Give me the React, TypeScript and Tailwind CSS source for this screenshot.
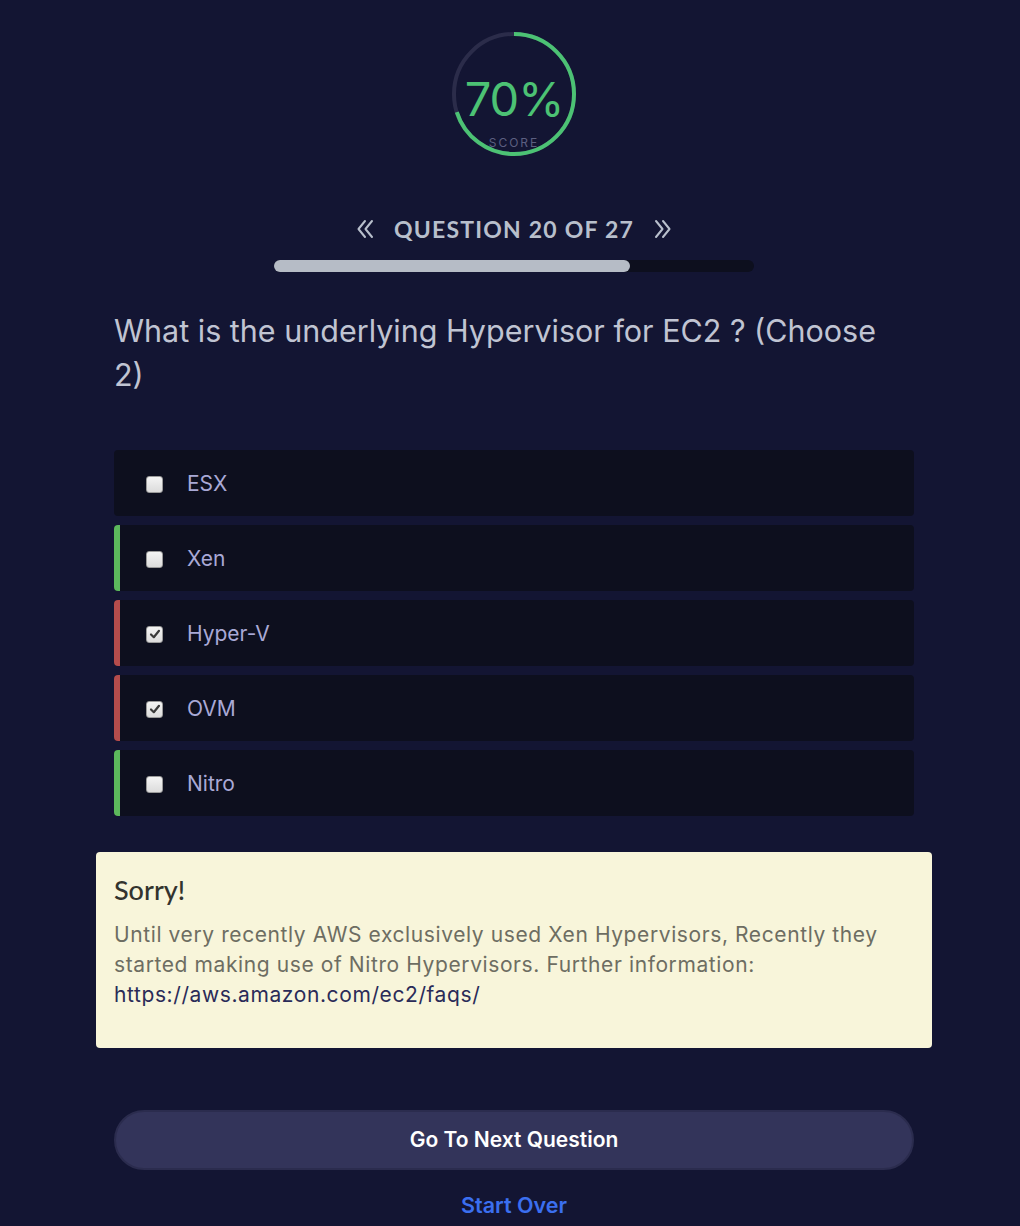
const options = [
  { label: "ESX", checked: false, mark: "" },
  { label: "Xen", checked: false, mark: "bg-[#5cb85c]" },
  { label: "Hyper-V", checked: true, mark: "bg-[#b54c4c]" },
  { label: "OVM", checked: true, mark: "bg-[#b54c4c]" },
  { label: "Nitro", checked: false, mark: "bg-[#5cb85c]" },
];

const ScoreRing = ({ value }: { value: number }) => {
  const r = 60;
  const c = 2 * Math.PI * r;
  return (
    <div className="relative h-[128px] w-[128px]">
      <svg width="128" height="128" viewBox="0 0 128 128">
        <circle cx="64" cy="64" r={r} fill="none" stroke="#2b2c4a" strokeWidth="4" />
        <circle
          cx="64"
          cy="64"
          r={r}
          fill="none"
          stroke="#4cc274"
          strokeWidth="4"
          strokeDasharray={`${(c * value) / 100} ${c}`}
          transform="rotate(-90 64 64)"
        />
      </svg>
      <div className="absolute inset-0 flex flex-col items-center">
        <span className="mt-[45px] text-[47px] leading-[48px] text-[#4cc274] font-['Inter',sans-serif] font-normal tracking-[-1px]">
          {value}%
        </span>
        <span className="mt-[14px] text-[12px] leading-[12px] tracking-[2px] text-[#5c5f80] font-['Inter',sans-serif]">
          SCORE
        </span>
      </div>
    </div>
  );
};

// double chevron, drawn taller than lucide's
const Chevrons = ({ flip }: { flip?: boolean }) => (
  <svg width="18" height="20" viewBox="0 0 18 20" className={flip ? "-scale-x-100" : ""}>
    <path d="M9 2 L2.5 10 L9 18 M16 2 L9.5 10 L16 18" fill="none" stroke="currentColor" strokeWidth="2" strokeLinecap="round" strokeLinejoin="round" />
  </svg>
);

const Checkbox = ({ checked }: { checked: boolean }) => (
  <div className="flex h-[17px] w-[17px] items-center justify-center rounded-[3px] border border-[#9a9a9a] bg-gradient-to-b from-[#f4f4f4] to-[#dcdcdc]">
    {checked && (
      <svg width="12" height="12" viewBox="0 0 12 12">
        <path d="M2 6.5 L4.8 9.2 L10 2.8" fill="none" stroke="#3a3a3a" strokeWidth="2.2" strokeLinecap="round" strokeLinejoin="round" />
      </svg>
    )}
  </div>
);

export default function App() {
  return (
    <div className="min-h-[1226px] w-full bg-[#131533] pl-[8px] font-['Inter',sans-serif]">
      <div className="mx-auto flex w-[836px] flex-col items-center pt-[30px]">
        <ScoreRing value={70} />

        <div className="mt-[54px] flex items-center gap-[20px] text-[#b8bfcc]">
          <Chevrons />
          <span className="font-['Lato',sans-serif] text-[23px] font-bold tracking-[1.2px]">
            QUESTION 20 OF 27
          </span>
          <Chevrons flip />
        </div>

        <div className="mt-[13px] h-[12px] w-[480px] rounded-full bg-[#0d0f1e]">
          <div className="h-full rounded-full bg-[#b6bcc6]" style={{ width: `${(20 / 27) * 100}%` }} />
        </div>

        <div className="mt-[37px] w-[800px]">
          <h1 className="w-[775px] text-[30.5px] leading-[44px] font-normal text-[#c0c4d2]">
            What is the underlying Hypervisor for EC2 ? (Choose 2)
          </h1>
        </div>

        <div className="mt-[53px] flex w-[800px] flex-col gap-[9px]">
          {options.map((o) => (
            <div key={o.label} className="flex h-[66px] overflow-hidden rounded-[4px] bg-[#0d0f1e]">
              <div className={`w-[6px] ${o.mark}`} />
              <div className="flex items-center gap-[24px] pl-[26px] pt-[3px]">
                <Checkbox checked={o.checked} />
                <span className="text-[21px] text-[#a9a9d6]">{o.label}</span>
              </div>
            </div>
          ))}
        </div>

        <div className="mt-[36px] flex h-[196px] w-[836px] flex-col rounded-[4px] bg-[#f8f5da] px-[18px] pt-[20px]">
          <h2 className="font-['Lato',sans-serif] text-[27px] leading-[36px] font-medium text-[#33332e]">Sorry!</h2>
          <p className="mt-[12px] text-[21px] leading-[30px] tracking-[0.6px] text-[#6d6d62]">
            Until very recently AWS exclusively used Xen Hypervisors, Recently they started making use of Nitro
            Hypervisors. Further information:{" "}
            <a className="text-[#2a2b58]">https://aws.amazon.com/ec2/faqs/</a>
          </p>
        </div>

        <button className="mt-[62px] h-[60px] w-[800px] rounded-full border-2 border-[#2b2c4e] bg-[#33345a] text-[21px] font-semibold text-white">
          Go To Next Question
        </button>

        <button className="mt-[19px] text-[21.5px] font-semibold text-[#3b6ff0]">Start Over</button>
      </div>
    </div>
  );
}
